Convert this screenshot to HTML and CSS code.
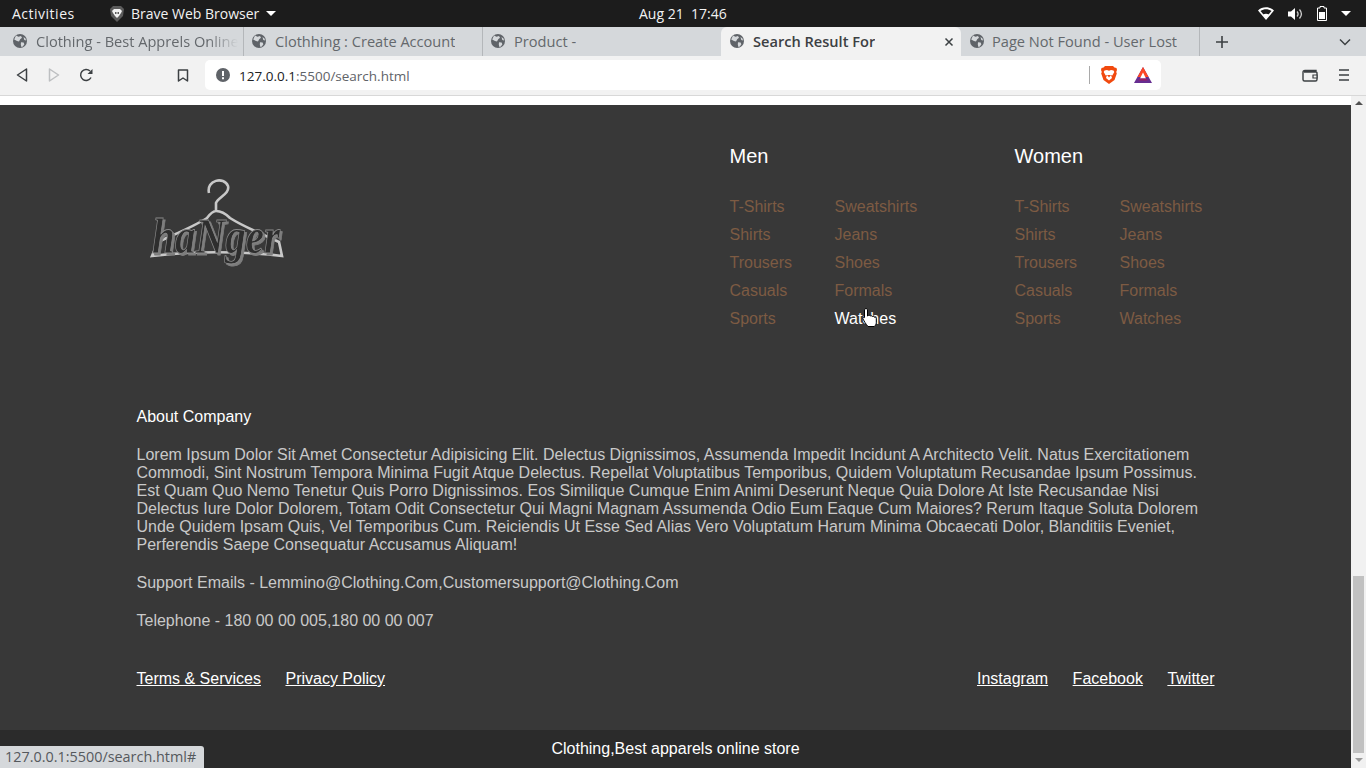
FILE: index.html
```html
<!DOCTYPE html>
<html lang="en">
<head>
  <meta charset="UTF-8" />
  <title>Search Result For</title>
  <link rel="stylesheet" href="styles.css">
</head>
<body>
  <svg class="icon-defs" width="0" height="0">
    <symbol id="globe" viewBox="0 0 14 14">
      <circle cx="7" cy="7" r="7" fill="#5f6368"/>
      <path d="M3 1.500l2.500 1.200 2.500-.6 1 1.600-1.800 1.600-1.200 2.200-2-.4L1.200 5.500zM8 8.200l2.600.4.8 1.600-1.600 2.400-1.400.4-.6-2.600zM10.500 3l2 1.600.6 2-1.800-.6z" fill="#d5d8db"/>
    </symbol>
  </svg>

  <!-- Ubuntu top bar -->
  <div class="topbar">
    <span class="activities">Activities</span>
    <div class="app-menu">
      <svg class="app-logo" width="14" height="16" viewBox="0 0 14 16">
        <path d="M3 0h8l3 3-1 7-6 6-6-6L0 3z" fill="#5b5b5b"/>
        <path d="M4 3h6l2 2-1 2-2 3-2 2-2-2-2-3-1-2z" fill="#f1f1f1"/>
        <path d="M5 6h1.500v2H5zM7.500 6H9v2H7.500z" fill="#5b5b5b"/>
      </svg>
      <span>Brave Web Browser</span>
      <span class="caret"></span>
    </div>
    <span class="clock">Aug 21&nbsp;&nbsp;17:46</span>
    <div class="tray">
      <svg width="16" height="13" viewBox="0 0 16 13"><path d="M0 3.500C4-.8 12-.8 16 3.500L8 13z" fill="#fff"/><path d="M2.500 4C6 1.800 10 1.800 13.500 4L8 10.500z" fill="#1c1c1c"/><path d="M5 7.600c2-1 4-1 6 0L8 11.500z" fill="#fff"/></svg>
      <svg width="15" height="14" viewBox="0 0 15 14"><path d="M0 4.500h3L7 1v12L3 9.500H0z" fill="#fff"/><path d="M9 4.500c1.300 1.500 1.300 3.500 0 5M11.500 2.500c2.400 2.800 2.400 6.200 0 9" fill="none" stroke="#ccc" stroke-width="1.300"/></svg>
      <svg width="10" height="15" viewBox="0 0 10 15"><path d="M3 .5h4v1.500h2.500v12.500H.5V2H3z" fill="none" stroke="#fff"/><rect x="2" y="6" width="6" height="7" fill="#fff"/></svg>
      <span class="caret"></span>
    </div>
  </div>

  <!-- Tab strip -->
  <div class="tabstrip">
    <div class="tab tab-fade"><svg class="favicon"><use href="#globe"/></svg><span class="tab-title">Clothing - Best Apprels Online Store</span></div>
    <div class="tab tab-sep"><svg class="favicon"><use href="#globe"/></svg><span class="tab-title">Clothhing : Create Account</span></div>
    <div class="tab tab-sep"><svg class="favicon"><use href="#globe"/></svg><span class="tab-title">Product -</span></div>
    <div class="tab active"><svg class="favicon"><use href="#globe"/></svg><span class="tab-title">Search Result For</span>
      <svg class="tab-close" width="10" height="10" viewBox="0 0 10 10"><path d="M1.500 1.500l7 7M8.500 1.500l-7 7" stroke="#3c4043" stroke-width="1.500"/></svg>
    </div>
    <div class="tab tab-last"><svg class="favicon"><use href="#globe"/></svg><span class="tab-title">Page Not Found - User Lost</span></div>
    <svg class="new-tab" width="12" height="12" viewBox="0 0 12 12"><path d="M6 0v12M0 6h12" stroke="#3c4043" stroke-width="1.600"/></svg>
    <svg class="tab-list" width="12" height="8" viewBox="0 0 12 8"><path d="M1 1.500l5 5 5-5" fill="none" stroke="#3c4043" stroke-width="1.500"/></svg>
  </div>

  <!-- Toolbar -->
  <div class="toolbar">
    <svg class="tool tool-back" width="12" height="14" viewBox="0 0 12 14"><path d="M10.500 1v12L1.500 7z" fill="none" stroke="#3c4043" stroke-width="1.500" stroke-linejoin="round"/></svg>
    <svg class="tool tool-forward" width="12" height="14" viewBox="0 0 12 14"><path d="M1.500 1v12l9-6z" fill="none" stroke="#bdbfc1" stroke-width="1.500" stroke-linejoin="round"/></svg>
    <svg class="tool tool-reload" width="14" height="14" viewBox="0 0 14 14"><path d="M12 9.500A5.500 5.500 0 1 1 11 3" fill="none" stroke="#3c4043" stroke-width="1.500"/><path d="M13.500 1v5h-5z" fill="#3c4043"/></svg>
    <svg class="tool tool-bookmark" width="12" height="13" viewBox="0 0 12 13"><path d="M1.500 1h9v11L6 9l-4.500 3z" fill="none" stroke="#3c4043" stroke-width="1.500" stroke-linejoin="round"/></svg>
    <div class="omnibox">
      <svg width="14" height="14" viewBox="0 0 14 14"><circle cx="7" cy="7" r="7" fill="#5f6368"/><path d="M6 3h2v5H6zM6 9.300h2v2H6z" fill="#fff"/></svg>
      <span class="url"><span class="url-host">127.0.0.1</span>:5500/search.html</span>
      <span class="omni-sep"></span>
      <svg class="brave-shield" width="16" height="18" viewBox="0 0 16 18">
        <path d="M4 0h8l1.500 1.500L15.500 2 16 4l-.8 2 .6 1.500L13.500 14 8 18l-5.500-4L.2 7.500.8 6 0 4l.5-2 2-.5z" fill="#f1490e"/>
        <path d="M3.500 4.500L6 4l2 .8L10 4l2.500.5.8 1.500-2 3.500L10 9 11 12 8 14.500 5 12l1-3-1.300.5-2-3.500z" fill="#fff"/>
        <path d="M6 9h4l-2 2.500z" fill="#f1490e"/>
      </svg>
      <svg class="bat" width="18" height="16" viewBox="0 0 18 16">
        <path d="M9 0l9 16H0z" fill="#662d91"/>
        <path d="M9 0l5.500 10H3.500z" fill="#ff4724"/>
        <path d="M9 5.500L12 11.500H6z" fill="#fff"/>
        <path d="M6 11.500h6L13.500 13.500h-9z" fill="#9e1f63"/>
      </svg>
    </div>
    <svg class="tool tool-wallet" width="16" height="13" viewBox="0 0 16 13"><path d="M14 3V1.500H3C1.500 1.500 1 2.300 1 3.500v7C1 11.500 1.700 12 2.500 12h11c.8 0 1.500-.5 1.500-1.500V4c0-.6-.4-1-1-1H2" fill="none" stroke="#3c4043" stroke-width="1.400"/><path d="M11 6h4v3h-4z" fill="#f2f2f2" stroke="#3c4043" stroke-width="1.200"/></svg>
    <svg class="tool tool-menu" width="10" height="12" viewBox="0 0 10 12"><path d="M0 1h10M0 6h10M0 11h10" stroke="#3c4043" stroke-width="1.500"/></svg>
  </div>

  <!-- Page -->
  <div class="viewport">
    <div class="page">
      <div class="page-strip"></div>
      <footer class="footer">
        <div class="footer-top">
          <svg class="logo" width="136" height="94" viewBox="0 0 136 94">
            <path d="M60 15c-3-13 15-17 19-7 2 8-10 11-12 17v8c-3 0-6 3-9 7-14 9-32 16-49 24L3 78c40-5 89-5 130 0l-3-14c-17-8-35-15-49-24-4-4-9-7-14-7" fill="none" stroke="#c8c8c8" stroke-width="2.600"/>
            <text class="logo-word" x="3" y="75" textLength="128" lengthAdjust="spacingAndGlyphs">haNger</text>
          </svg>
          <div class="menu">
            <h2 class="menu-title">Men</h2>
            <div class="menu-links">
              <a href="#">T-Shirts</a><a href="#">Sweatshirts</a>
              <a href="#">Shirts</a><a href="#">Jeans</a>
              <a href="#">Trousers</a><a href="#">Shoes</a>
              <a href="#">Casuals</a><a href="#">Formals</a>
              <a href="#">Sports</a><a href="#" class="hovered">Watches</a>
            </div>
          </div>
          <div class="menu">
            <h2 class="menu-title">Women</h2>
            <div class="menu-links">
              <a href="#">T-Shirts</a><a href="#">Sweatshirts</a>
              <a href="#">Shirts</a><a href="#">Jeans</a>
              <a href="#">Trousers</a><a href="#">Shoes</a>
              <a href="#">Casuals</a><a href="#">Formals</a>
              <a href="#">Sports</a><a href="#">Watches</a>
            </div>
          </div>
        </div>

        <h3 class="about-title">About Company</h3>
        <p class="about">lorem ipsum dolor sit amet consectetur adipisicing elit. delectus dignissimos, assumenda impedit incidunt a architecto velit. natus exercitationem commodi, sint nostrum tempora minima fugit atque delectus. repellat voluptatibus temporibus, quidem voluptatum recusandae ipsum possimus. est quam quo nemo tenetur quis porro dignissimos. eos similique cumque enim animi deserunt neque quia dolore at iste recusandae nisi delectus iure dolor dolorem, totam odit consectetur qui magni magnam assumenda odio eum eaque cum maiores? rerum itaque soluta dolorem unde quidem ipsam quis, vel temporibus cum. reiciendis ut esse sed alias vero voluptatum harum minima obcaecati dolor, blanditiis eveniet, perferendis saepe consequatur accusamus aliquam!</p>
        <p class="about">support emails - lemmino@clothing.com,customersupport@clothing.com</p>
        <p class="about">telephone - 180 00 00 005,180 00 00 007</p>

        <div class="legal">
          <div class="legal-group">
            <a href="#">Terms &amp; Services</a>
            <a href="#">Privacy Policy</a>
          </div>
          <div class="legal-group">
            <a href="#">Instagram</a>
            <a href="#">Facebook</a>
            <a href="#">Twitter</a>
          </div>
        </div>
      </footer>
      <div class="copyright">Clothing,Best apparels online store</div>
    </div>

    <div class="scrollbar">
      <span class="arrow-up"></span>
      <div class="scroll-track"><div class="scroll-thumb"></div></div>
      <span class="arrow-down"></span>
    </div>

    <div class="status-bubble">127.0.0.1:5500/search.html#</div>
    <svg class="cursor" width="16" height="20" viewBox="0 0 16 20">
      <path d="M2.500 1.800c0-1.700 3-1.700 3 0V8l1-.5c1-.4 1.500 0 1.800.5 1-.5 1.700-.2 2 .5 1-.4 1.800 0 2 .7 1.200-.3 2 .3 2 1.300v4c0 2-1 3-2 4H6c-1-1-2-2.500-3-4L1 11c-.7-1 .5-2.200 1.500-1.400z" fill="#fff" stroke="#000" stroke-width="1"/>
    </svg>
  </div>
</body>
</html>
```

FILE: styles.css
```css
* { box-sizing: border-box; }

html, body {
  height: 100%;
}

body {
  margin: 0;
  overflow: hidden;
  display: flex;
  flex-direction: column;
  font-family: "Open Sans", "Noto Sans", sans-serif;
  background: #fff;
}

.icon-defs {
  position: absolute;
}

/* Top bar */
.topbar {
  height: 27px;
  flex: none;
  background: #1c1c1c;
  color: #f2f2f2;
  font-size: 14px;
  display: flex;
  align-items: center;
  padding: 0 12px;
  position: relative;
}

.activities {
  width: 98px;
  letter-spacing: 0.5px;
}

.app-menu {
  display: flex;
  align-items: center;
  gap: 7px;
}

.caret {
  width: 0;
  height: 0;
  border-left: 5px solid transparent;
  border-right: 5px solid transparent;
  border-top: 5px solid #fff;
}

.clock {
  position: absolute;
  left: 639px;
  font-size: 14px;
}

.tray {
  margin-left: auto;
  display: flex;
  align-items: center;
  gap: 14px;
  padding-right: 3px;
}

/* Tabs */
.tabstrip {
  height: 29px;
  flex: none;
  background: #d5d8db;
  display: flex;
  align-items: center;
  padding-left: 4px;
}

.tab {
  width: 239px;
  height: 29px;
  flex: none;
  display: flex;
  align-items: center;
  gap: 9px;
  padding: 0 0 1px 9px;
  color: #64686c;
  font-size: 14.600px;
  position: relative;
}

.tab-sep {
  padding-left: 8px;
  border-left: 1px solid #b4b7ba;
}

.tab-last {
  gap: 8px;
  border-right: 1px solid #b4b7ba;
}

.favicon {
  width: 14px;
  height: 14px;
  flex: none;
}

.tab-title {
  white-space: nowrap;
  overflow: hidden;
}

.tab-fade .tab-title {
  width: 202px;
  -webkit-mask-image: linear-gradient(to right, #000 85%, transparent);
  mask-image: linear-gradient(to right, #000 85%, transparent);
}

.tab.active {
  width: 240px;
  background: #f2f2f2;
  border-radius: 6px 6px 0 0;
  color: #3c4043;
  font-weight: 600;
}

.tab-close {
  position: absolute;
  right: 7px;
  top: 10px;
}

.new-tab {
  margin-left: 16px;
}

.tab-list {
  margin-left: auto;
  margin-right: 15px;
}

/* Toolbar */
.toolbar {
  height: 40px;
  flex: none;
  background: #f2f2f2;
  border-bottom: 1px solid #d8d8d8;
  display: flex;
  align-items: center;
  padding-bottom: 1px;
}

.tool {
  flex: none;
}

.tool-back { margin-left: 16px; }
.tool-forward { margin-left: 20px; }
.tool-reload { margin-left: 19px; }
.tool-bookmark { margin-left: 84px; }
.tool-wallet { margin-left: 141px; }
.tool-menu { margin-left: 21px; }

.omnibox {
  width: 956px;
  height: 30px;
  margin-left: 16px;
  background: #fff;
  border-radius: 5px;
  display: flex;
  align-items: center;
  padding-left: 11px;
}

.url {
  margin: 1px 0 0 9px;
  font-size: 13.500px;
  color: #5f6368;
}

.url-host {
  color: #202124;
}

.omni-sep {
  width: 1px;
  height: 18px;
  background: #a9a9a9;
  margin-left: auto;
}

.brave-shield {
  margin-left: 11px;
}

.bat {
  margin-left: 17px;
  margin-right: 9px;
}

/* Page area */
.viewport {
  flex: 1;
  min-height: 0;
  display: flex;
  position: relative;
  overflow: hidden;
}

.page {
  flex: 1;
  min-width: 0;
  font-family: "Liberation Sans", Arial, sans-serif;
  font-size: 16px;
}

.page-strip {
  height: 9px;
  background: #fff;
}

.footer {
  background: #383838;
  padding: 40px 136.500px 43px;
  height: 625px;
}

.footer-top {
  display: grid;
  grid-template-columns: 593px 285px 1fr;
  margin-bottom: 75px;
}

.logo {
  margin: 33px 0 0 12px;
}

.logo-word {
  font-family: "Liberation Serif", serif;
  font-style: italic;
  font-weight: 700;
  font-size: 50px;
  fill: #2e2e2e;
  stroke: #8a8a8a;
  stroke-width: 0.8;
  filter: drop-shadow(2px 2px 0 #7d7d7d);
}

.menu-title {
  margin: 0 0 25px;
  font-size: 20px;
  font-weight: 400;
  line-height: 23px;
  color: #fff;
}

.menu-links {
  display: grid;
  grid-template-columns: 105px 1fr;
  grid-auto-rows: 28px;
  align-items: center;
}

.menu-links a {
  color: #7d5b43;
  text-decoration: none;
}

.menu-links a.hovered {
  color: #fff;
}

.about-title {
  margin: 0 0 20px;
  font-size: 16px;
  font-weight: 400;
  line-height: 18px;
  color: #fff;
}

.about {
  margin: 0 0 20px;
  line-height: 18px;
  color: #c9c9c9;
  text-transform: capitalize;
}

.legal {
  display: flex;
  justify-content: space-between;
  margin-top: 40px;
  line-height: 18px;
}

.legal-group {
  display: flex;
  gap: 24.500px;
}

.legal-group a {
  color: #fff;
}

.copyright {
  height: 38px;
  background: #2b2b2b;
  color: #fff;
  display: flex;
  align-items: center;
  justify-content: center;
}

/* Scrollbar */
.scrollbar {
  width: 15px;
  flex: none;
  background: #f1f1f1;
  display: flex;
  flex-direction: column;
  align-items: center;
  padding: 5px 0 6px;
}

.arrow-up, .arrow-down {
  width: 0;
  height: 0;
  flex: none;
  border-left: 4px solid transparent;
  border-right: 4px solid transparent;
}

.arrow-up {
  border-bottom: 4px solid #505050;
}

.arrow-down {
  border-top: 4px solid #9a9a9a;
}

.scroll-track {
  flex: 1;
  width: 11px;
  display: flex;
  align-items: flex-end;
  padding-bottom: 5px;
}

.scroll-thumb {
  width: 100%;
  height: 177px;
  background: #c1c1c1;
}

/* Overlays */
.status-bubble {
  position: absolute;
  left: 0;
  bottom: 0;
  height: 22px;
  padding: 0 8px 0 5px;
  background: #d5d8db;
  border-radius: 0 3px 0 0;
  color: #55595d;
  font-size: 14.400px;
  line-height: 21px;
}

.cursor {
  position: absolute;
  left: 862px;
  top: 212px;
}
```
